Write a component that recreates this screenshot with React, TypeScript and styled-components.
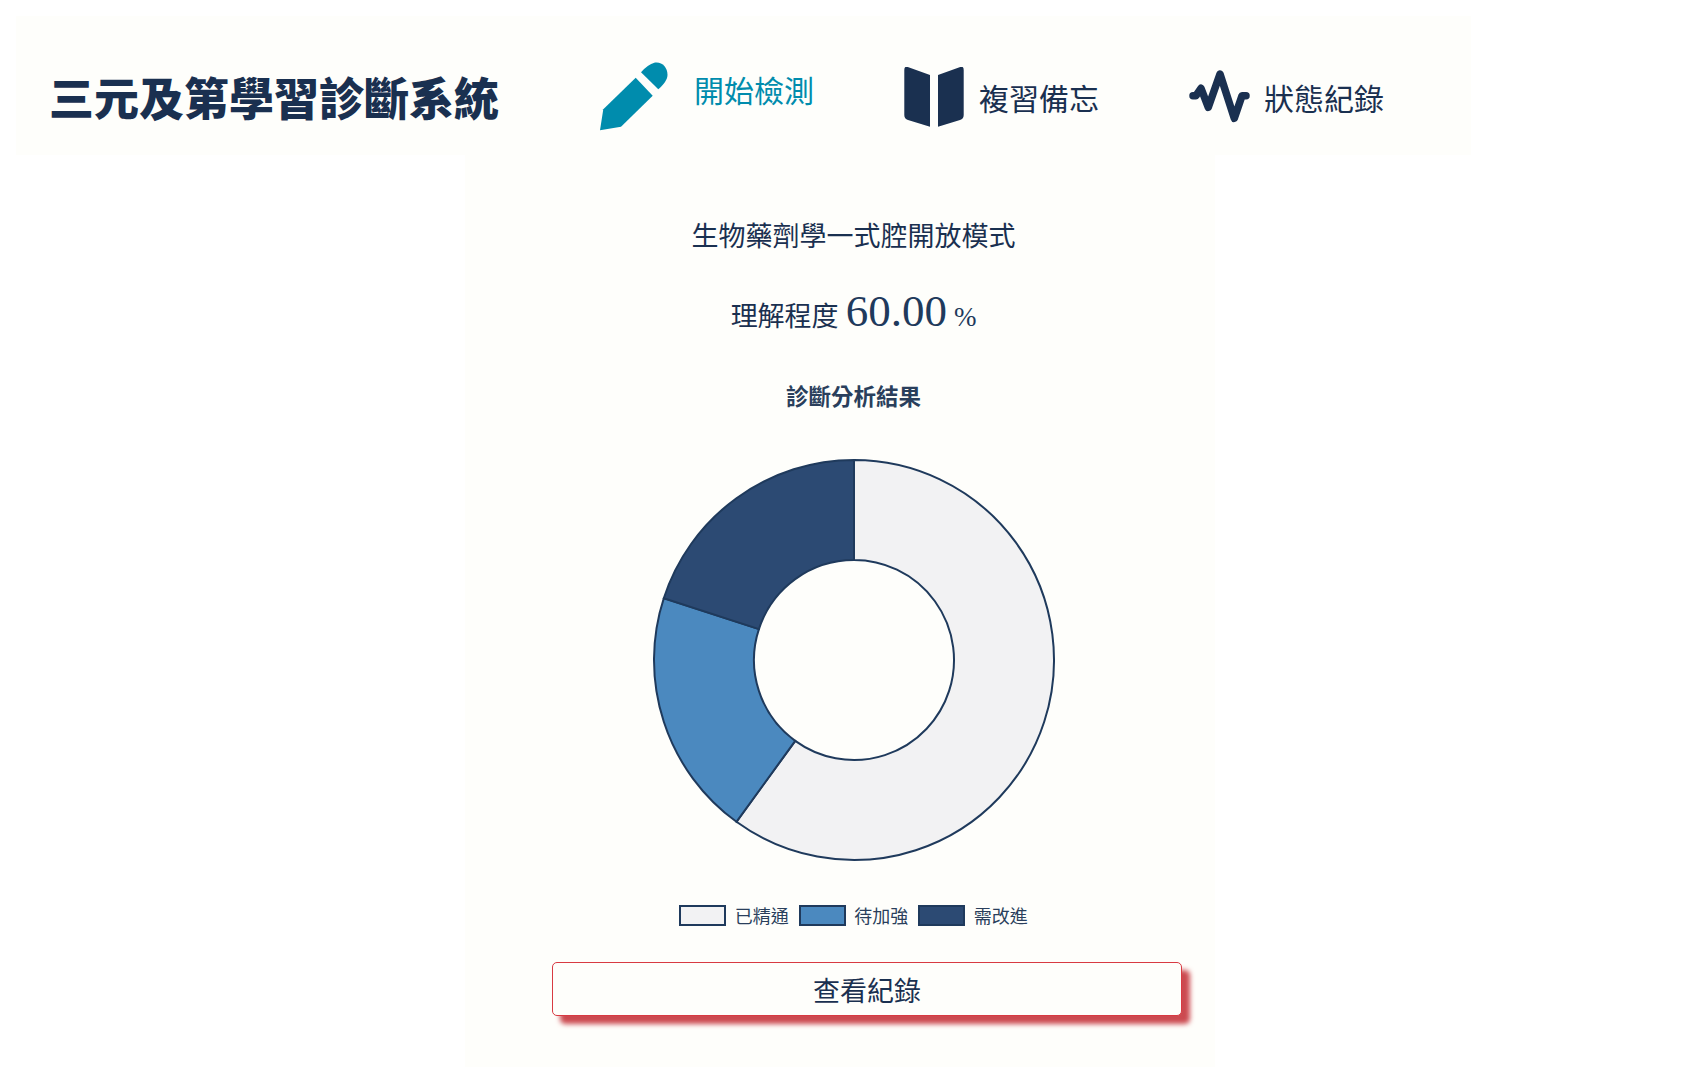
import styled, { createGlobalStyle } from "styled-components";

const NAVY = "#1a3050";
const TEAL = "#008cad";
const PANEL = "#fefefb";
const CJK = `"Noto Sans CJK TC", "Noto Sans", sans-serif`;

const GlobalStyle = createGlobalStyle`
  html, body {
    margin: 0;
    padding: 0;
    background: #ffffff;
    color: ${NAVY};
    font-family: ${CJK};
  }
`;

const Page = styled.div`
  width: 1708px;
  height: 1076px;
  overflow: hidden;
`;

const Header = styled.header`
  display: flex;
  align-items: center;
  box-sizing: border-box;
  width: 1455px;
  height: 139px;
  margin: 16px 0 0 16px;
  padding: 23px 0 0 33px;
  background: ${PANEL};
`;

const Brand = styled.h1`
  width: 551px;
  margin: 0;
  font-size: 45px;
  line-height: 1.2;
  font-weight: 900;
  white-space: nowrap;
`;

const Nav = styled.nav`
  display: flex;
  align-items: center;
`;

const NavItem = styled.a<{ $active?: boolean; $width: number; $gap: number }>`
  display: flex;
  align-items: center;
  width: ${(p) => p.$width}px;
  gap: ${(p) => p.$gap}px;
  color: ${(p) => (p.$active ? TEAL : NAVY)};
  font-size: 30px;
  line-height: 1.2;
`;

const NavLabel = styled.span<{ $raised?: boolean }>`
  margin-bottom: ${(p) => (p.$raised ? 17 : 0)}px;
`;

const Main = styled.main`
  display: flex;
  flex-direction: column;
  align-items: center;
  box-sizing: border-box;
  width: 750px;
  height: 912px;
  margin-left: 465px;
  padding-left: 27px;
  background: ${PANEL};
`;

const Topic = styled.h2`
  margin: 60px 0 0;
  font-size: 27px;
  line-height: 40px;
  font-weight: 400;
`;

const Score = styled.div`
  display: flex;
  align-items: baseline;
  margin-top: 26px;
  font-size: 27px;
  line-height: 60px;
`;

const ScoreValue = styled.span`
  margin-left: 7px;
  font-family: "Liberation Serif", serif;
  font-size: 45px;
  color: #1f3a5c;
`;

const ScoreUnit = styled.span`
  margin-left: 7px;
  font-family: "Liberation Serif", serif;
  font-size: 27px;
  color: #1f3a5c;
`;

const ChartTitle = styled.div`
  margin-top: 32px;
  font-size: 22.5px;
  line-height: 32px;
  font-weight: 700;
  color: #2a3f5c;
`;

const Donut = styled.svg`
  display: block;
  margin-top: 47px;
`;

const Legend = styled.ul`
  display: flex;
  align-items: center;
  gap: 10px;
  margin: 41px 0 0;
  padding: 0;
  list-style: none;
`;

const LegendItem = styled.li`
  display: flex;
  align-items: center;
  gap: 8.5px;
  font-size: 18px;
  line-height: 24px;
  color: #2a3f5c;
`;

const Swatch = styled.span<{ $color: string }>`
  display: block;
  width: 47px;
  height: 21px;
  margin-top: 1px;
  box-sizing: border-box;
  border: 2.5px solid #1f3a5c;
  background: ${(p) => p.$color};
`;

const RecordButton = styled.button`
  display: block;
  width: 630px;
  height: 54px;
  margin: 35px 0 0 27px;
  padding: 0;
  border: 1px solid #d83a42;
  border-radius: 5px;
  background: ${PANEL};
  box-shadow: 8px 8px 5px #cc4a50;
  color: ${NAVY};
  font-family: ${CJK};
  font-size: 27px;
`;

const segments = [
  { label: "已精通", value: 60, color: "#f2f2f3" },
  { label: "待加強", value: 20, color: "#4b89bf" },
  { label: "需改進", value: 20, color: "#2c4a73" },
];

const R = 200;
const r = 100;
const C = 202;

const point = (radius: number, pct: number) => {
  const a = (pct / 100) * 2 * Math.PI;
  return `${C + radius * Math.sin(a)} ${C - radius * Math.cos(a)}`;
};

const arc = (from: number, to: number) => {
  const large = to - from > 50 ? 1 : 0;
  return `M${point(R, from)}A${R} ${R} 0 ${large} 1 ${point(R, to)}L${point(r, to)}A${r} ${r} 0 ${large} 0 ${point(r, from)}Z`;
};

const PenIcon = () => (
  <svg width="68" height="70" viewBox="0 0 68 70">
    <path d="M35.7 15.7 52.7 33.7 21 64.7 0 68.3 3.3 47.3Z" fill={TEAL} />
    <path d="M41 10.3Q47 3 55 .5C62-.5 67.5 5 67.5 13 67.5 18 63 23 58.3 27.3Z" fill={TEAL} />
  </svg>
);

const BookIcon = () => (
  <svg width="60" height="61" viewBox="0 1 60 61">
    <path d="M3.5.9 26 9V60.7L4 54Q.3 53 .3 49V4Q.3 0 3.5.9Z" fill={NAVY} />
    <path d="M56.5.9 34 9V60.7L56 54Q59.7 53 59.7 49V4Q59.7 0 56.5.9Z" fill={NAVY} />
  </svg>
);

const PulseIcon = () => (
  <svg width="62" height="54" viewBox="-1 0 62 54" fill="none">
    <path
      d="M4 25.7H7L12 18.3 19.3 37.3 31 4 45.3 48.3 53 25.7H57"
      stroke={NAVY}
      strokeWidth="7.5"
      strokeLinecap="round"
      strokeLinejoin="round"
    />
  </svg>
);

export default function App() {
  let start = 0;
  return (
    <Page>
      <GlobalStyle />
      <Header>
        <Brand>三元及第學習診斷系統</Brand>
        <Nav>
          <NavItem $active $width={304} $gap={26}>
            <PenIcon />
            <NavLabel $raised>開始檢測</NavLabel>
          </NavItem>
          <NavItem $width={284} $gap={15}>
            <BookIcon />
            <NavLabel>複習備忘</NavLabel>
          </NavItem>
          <NavItem $width={210} $gap={14}>
            <PulseIcon />
            <NavLabel>狀態紀錄</NavLabel>
          </NavItem>
        </Nav>
      </Header>
      <Main>
        <Topic>生物藥劑學一式腔開放模式</Topic>
        <Score>
          理解程度
          <ScoreValue>60.00</ScoreValue>
          <ScoreUnit>%</ScoreUnit>
        </Score>
        <ChartTitle>診斷分析結果</ChartTitle>
        <Donut width="404" height="404" viewBox="0 0 404 404">
          {segments.map((s) => {
            const d = arc(start, start + s.value);
            start += s.value;
            return <path key={s.label} d={d} fill={s.color} stroke="#1f3a5c" strokeWidth="2" />;
          })}
        </Donut>
        <Legend>
          {segments.map((s) => (
            <LegendItem key={s.label}>
              <Swatch $color={s.color} />
              {s.label}
            </LegendItem>
          ))}
        </Legend>
        <RecordButton>查看紀錄</RecordButton>
      </Main>
    </Page>
  );
}
